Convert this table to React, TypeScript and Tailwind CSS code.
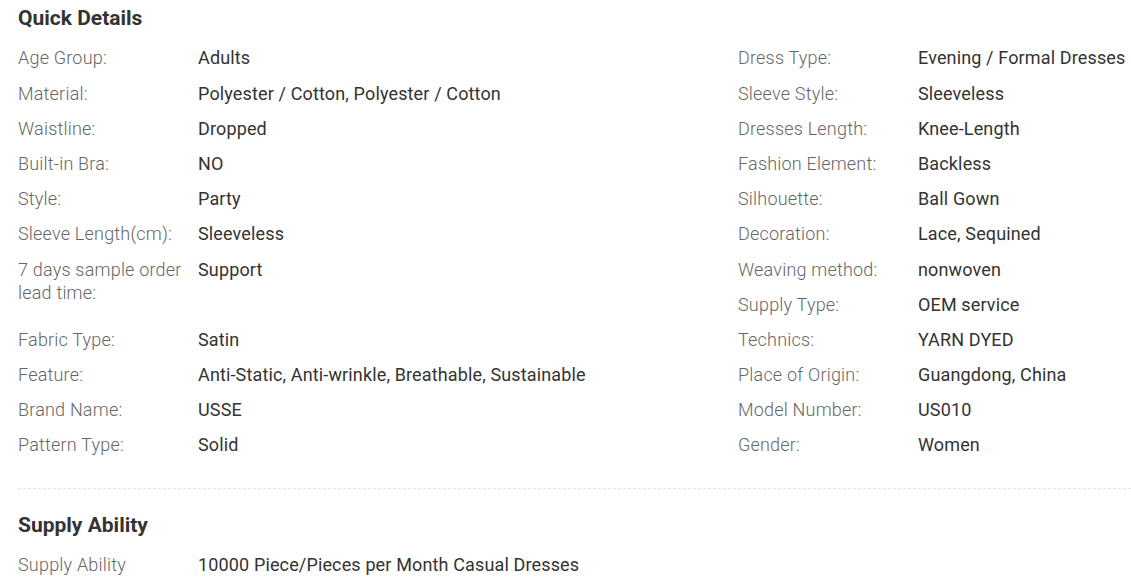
const left: [string, string, boolean?][] = [
  ['Age Group:', 'Adults'],
  ['Material:', 'Polyester / Cotton, Polyester / Cotton'],
  ['Waistline:', 'Dropped'],
  ['Built-in Bra:', 'NO'],
  ['Style:', 'Party'],
  ['Sleeve Length(cm):', 'Sleeveless'],
  ['7 days sample order lead time:', 'Support', true],
  ['Fabric Type:', 'Satin'],
  ['Feature:', 'Anti-Static, Anti-wrinkle, Breathable, Sustainable'],
  ['Brand Name:', 'USSE'],
  ['Pattern Type:', 'Solid'],
]

const right: [string, string][] = [
  ['Dress Type:', 'Evening / Formal Dresses'],
  ['Sleeve Style:', 'Sleeveless'],
  ['Dresses Length:', 'Knee-Length'],
  ['Fashion Element:', 'Backless'],
  ['Silhouette:', 'Ball Gown'],
  ['Decoration:', 'Lace, Sequined'],
  ['Weaving method:', 'nonwoven'],
  ['Supply Type:', 'OEM service'],
  ['Technics:', 'YARN DYED'],
  ['Place of Origin:', 'Guangdong, China'],
  ['Model Number:', 'US010'],
  ['Gender:', 'Women'],
]

function Row({ label, value, tall }: { label: string; value: string; tall?: boolean }) {
  return (
    <div className={`flex py-[6px] leading-[23.2px] ${tall ? 'h-[70.4px]' : 'h-[35.2px]'}`}>
      <div className="w-[180px] shrink-0 pr-2 font-light tracking-[0.2px] text-[#666]">{label}</div>
      <div className="tracking-[0.14px] text-[#333]">{value}</div>
    </div>
  )
}

export default function App() {
  return (
    <div className="min-h-screen bg-white pl-[18px] text-[18px] font-['Roboto',sans-serif]">
      <h2 className="pt-[4px] text-[21px] leading-[28px] font-bold text-[#333]">Quick Details</h2>

      <div className="mt-[8.4px] flex">
        <div className="w-[720px]">
          {left.map(([l, v, t]) => (
            <Row key={l} label={l} value={v} tall={t} />
          ))}
        </div>
        <div className="flex-1">
          {right.map(([l, v]) => (
            <Row key={l} label={l} value={v} />
          ))}
        </div>
      </div>

      <div className="mt-[25px] border-t border-dashed border-[#e5e5e5]" />

      <h2 className="mt-[22px] text-[21px] leading-[28px] font-bold text-[#333]">Supply Ability</h2>
      <div className="mt-[8px]">
        <Row label="Supply Ability" value="10000 Piece/Pieces per Month Casual Dresses" />
      </div>
    </div>
  )
}
